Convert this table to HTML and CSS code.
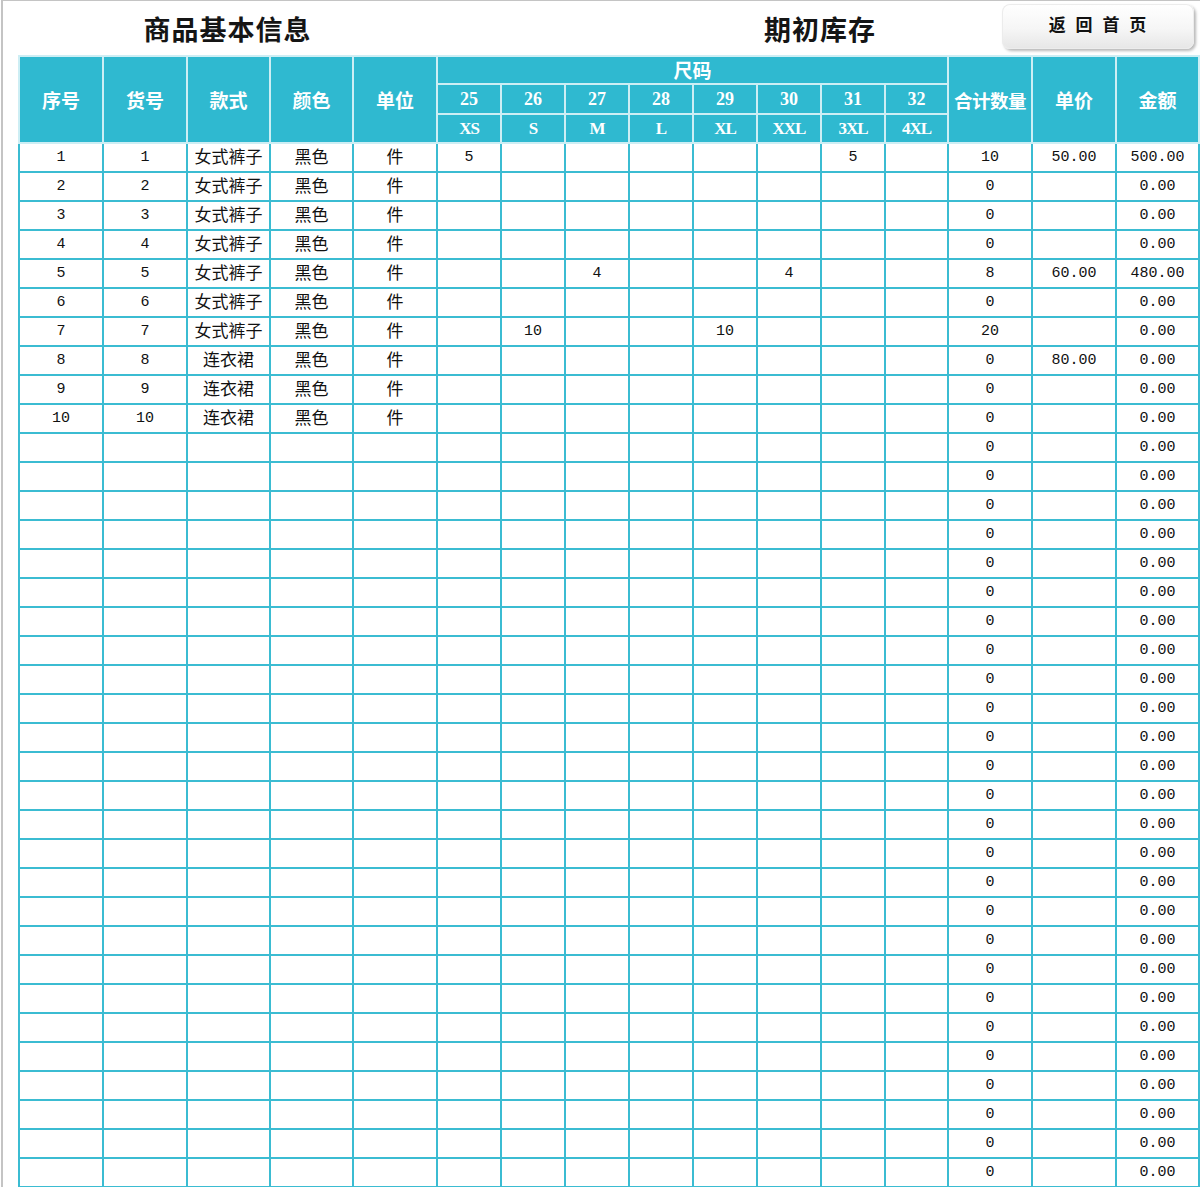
FILE: index.html
```html
<!DOCTYPE html>
<html lang="zh">
<head>
<meta charset="utf-8">
<title>期初库存</title>
<link rel="stylesheet" href="styles.css">
</head>
<body>
<div class="sheet">
  <div class="top">
    <div class="title t1">商品基本信息</div>
    <div class="title t2">期初库存</div>
    <div class="btn">返 回 首 页</div>
  </div>
  <table class="grid">
    <colgroup>
      <col class="w84"><col class="w84"><col class="w83"><col class="w83"><col class="w84">
      <col class="w64"><col class="w64"><col class="w64"><col class="w64"><col class="w64"><col class="w64"><col class="w64"><col class="w63">
      <col class="w84"><col class="w84"><col class="w83">
    </colgroup>
    <thead>
      <tr class="h1">
        <th rowspan="3">序号</th><th rowspan="3">货号</th><th rowspan="3">款式</th><th rowspan="3">颜色</th><th rowspan="3">单位</th>
        <th colspan="8">尺码</th>
        <th rowspan="3" class="tight">合计数量</th><th rowspan="3">单价</th><th rowspan="3">金额</th>
      </tr>
      <tr class="h2 num">
        <th>25</th><th>26</th><th>27</th><th>28</th><th>29</th><th>30</th><th>31</th><th>32</th>
      </tr>
      <tr class="h3 num">
        <th>XS</th><th>S</th><th>M</th><th>L</th><th>XL</th><th>XXL</th><th>3XL</th><th>4XL</th>
      </tr>
    </thead>
    <tbody>
      <tr><td>1</td><td>1</td><td class="cn">女式裤子</td><td class="cn">黑色</td><td class="cn">件</td><td>5</td><td></td><td></td><td></td><td></td><td></td><td>5</td><td></td><td>10</td><td>50.00</td><td>500.00</td></tr>
      <tr><td>2</td><td>2</td><td class="cn">女式裤子</td><td class="cn">黑色</td><td class="cn">件</td><td></td><td></td><td></td><td></td><td></td><td></td><td></td><td></td><td>0</td><td></td><td>0.00</td></tr>
      <tr><td>3</td><td>3</td><td class="cn">女式裤子</td><td class="cn">黑色</td><td class="cn">件</td><td></td><td></td><td></td><td></td><td></td><td></td><td></td><td></td><td>0</td><td></td><td>0.00</td></tr>
      <tr><td>4</td><td>4</td><td class="cn">女式裤子</td><td class="cn">黑色</td><td class="cn">件</td><td></td><td></td><td></td><td></td><td></td><td></td><td></td><td></td><td>0</td><td></td><td>0.00</td></tr>
      <tr><td>5</td><td>5</td><td class="cn">女式裤子</td><td class="cn">黑色</td><td class="cn">件</td><td></td><td></td><td>4</td><td></td><td></td><td>4</td><td></td><td></td><td>8</td><td>60.00</td><td>480.00</td></tr>
      <tr><td>6</td><td>6</td><td class="cn">女式裤子</td><td class="cn">黑色</td><td class="cn">件</td><td></td><td></td><td></td><td></td><td></td><td></td><td></td><td></td><td>0</td><td></td><td>0.00</td></tr>
      <tr><td>7</td><td>7</td><td class="cn">女式裤子</td><td class="cn">黑色</td><td class="cn">件</td><td></td><td>10</td><td></td><td></td><td>10</td><td></td><td></td><td></td><td>20</td><td></td><td>0.00</td></tr>
      <tr><td>8</td><td>8</td><td class="cn">连衣裙</td><td class="cn">黑色</td><td class="cn">件</td><td></td><td></td><td></td><td></td><td></td><td></td><td></td><td></td><td>0</td><td>80.00</td><td>0.00</td></tr>
      <tr><td>9</td><td>9</td><td class="cn">连衣裙</td><td class="cn">黑色</td><td class="cn">件</td><td></td><td></td><td></td><td></td><td></td><td></td><td></td><td></td><td>0</td><td></td><td>0.00</td></tr>
      <tr><td>10</td><td>10</td><td class="cn">连衣裙</td><td class="cn">黑色</td><td class="cn">件</td><td></td><td></td><td></td><td></td><td></td><td></td><td></td><td></td><td>0</td><td></td><td>0.00</td></tr>
      <tr><td></td><td></td><td></td><td></td><td></td><td></td><td></td><td></td><td></td><td></td><td></td><td></td><td></td><td>0</td><td></td><td>0.00</td></tr>
      <tr><td></td><td></td><td></td><td></td><td></td><td></td><td></td><td></td><td></td><td></td><td></td><td></td><td></td><td>0</td><td></td><td>0.00</td></tr>
      <tr><td></td><td></td><td></td><td></td><td></td><td></td><td></td><td></td><td></td><td></td><td></td><td></td><td></td><td>0</td><td></td><td>0.00</td></tr>
      <tr><td></td><td></td><td></td><td></td><td></td><td></td><td></td><td></td><td></td><td></td><td></td><td></td><td></td><td>0</td><td></td><td>0.00</td></tr>
      <tr><td></td><td></td><td></td><td></td><td></td><td></td><td></td><td></td><td></td><td></td><td></td><td></td><td></td><td>0</td><td></td><td>0.00</td></tr>
      <tr><td></td><td></td><td></td><td></td><td></td><td></td><td></td><td></td><td></td><td></td><td></td><td></td><td></td><td>0</td><td></td><td>0.00</td></tr>
      <tr><td></td><td></td><td></td><td></td><td></td><td></td><td></td><td></td><td></td><td></td><td></td><td></td><td></td><td>0</td><td></td><td>0.00</td></tr>
      <tr><td></td><td></td><td></td><td></td><td></td><td></td><td></td><td></td><td></td><td></td><td></td><td></td><td></td><td>0</td><td></td><td>0.00</td></tr>
      <tr><td></td><td></td><td></td><td></td><td></td><td></td><td></td><td></td><td></td><td></td><td></td><td></td><td></td><td>0</td><td></td><td>0.00</td></tr>
      <tr><td></td><td></td><td></td><td></td><td></td><td></td><td></td><td></td><td></td><td></td><td></td><td></td><td></td><td>0</td><td></td><td>0.00</td></tr>
      <tr><td></td><td></td><td></td><td></td><td></td><td></td><td></td><td></td><td></td><td></td><td></td><td></td><td></td><td>0</td><td></td><td>0.00</td></tr>
      <tr><td></td><td></td><td></td><td></td><td></td><td></td><td></td><td></td><td></td><td></td><td></td><td></td><td></td><td>0</td><td></td><td>0.00</td></tr>
      <tr><td></td><td></td><td></td><td></td><td></td><td></td><td></td><td></td><td></td><td></td><td></td><td></td><td></td><td>0</td><td></td><td>0.00</td></tr>
      <tr><td></td><td></td><td></td><td></td><td></td><td></td><td></td><td></td><td></td><td></td><td></td><td></td><td></td><td>0</td><td></td><td>0.00</td></tr>
      <tr><td></td><td></td><td></td><td></td><td></td><td></td><td></td><td></td><td></td><td></td><td></td><td></td><td></td><td>0</td><td></td><td>0.00</td></tr>
      <tr><td></td><td></td><td></td><td></td><td></td><td></td><td></td><td></td><td></td><td></td><td></td><td></td><td></td><td>0</td><td></td><td>0.00</td></tr>
      <tr><td></td><td></td><td></td><td></td><td></td><td></td><td></td><td></td><td></td><td></td><td></td><td></td><td></td><td>0</td><td></td><td>0.00</td></tr>
      <tr><td></td><td></td><td></td><td></td><td></td><td></td><td></td><td></td><td></td><td></td><td></td><td></td><td></td><td>0</td><td></td><td>0.00</td></tr>
      <tr><td></td><td></td><td></td><td></td><td></td><td></td><td></td><td></td><td></td><td></td><td></td><td></td><td></td><td>0</td><td></td><td>0.00</td></tr>
      <tr><td></td><td></td><td></td><td></td><td></td><td></td><td></td><td></td><td></td><td></td><td></td><td></td><td></td><td>0</td><td></td><td>0.00</td></tr>
      <tr><td></td><td></td><td></td><td></td><td></td><td></td><td></td><td></td><td></td><td></td><td></td><td></td><td></td><td>0</td><td></td><td>0.00</td></tr>
      <tr><td></td><td></td><td></td><td></td><td></td><td></td><td></td><td></td><td></td><td></td><td></td><td></td><td></td><td>0</td><td></td><td>0.00</td></tr>
      <tr><td></td><td></td><td></td><td></td><td></td><td></td><td></td><td></td><td></td><td></td><td></td><td></td><td></td><td>0</td><td></td><td>0.00</td></tr>
      <tr><td></td><td></td><td></td><td></td><td></td><td></td><td></td><td></td><td></td><td></td><td></td><td></td><td></td><td>0</td><td></td><td>0.00</td></tr>
      <tr><td></td><td></td><td></td><td></td><td></td><td></td><td></td><td></td><td></td><td></td><td></td><td></td><td></td><td>0</td><td></td><td>0.00</td></tr>
      <tr><td></td><td></td><td></td><td></td><td></td><td></td><td></td><td></td><td></td><td></td><td></td><td></td><td></td><td>0</td><td></td><td>0.00</td></tr>
    </tbody>
  </table>
</div>
</body>
</html>
```

FILE: styles.css
```css
* { box-sizing: border-box; }
html, body { margin: 0; padding: 0; background: #ffffff; }
body { width: 1200px; height: 1187px; overflow: hidden; }

.sheet {
  position: relative;
  margin-left: 1px;
  border-left: 2px solid #c4c4c4;
  border-top: 1px solid #c4c4c4;
  padding-left: 15px;
  height: 1187px;
}

.top {
  display: grid;
  grid-template-columns: 419px 762px;
  height: 54px;
  align-items: center;
}
.title {
  font-family: "Noto Sans CJK SC", sans-serif;
  font-weight: 700;
  font-size: 27px;
  color: #151515;
  text-align: center;
  letter-spacing: 1px;
}
.t2 { padding-left: 4px; }

.btn {
  position: absolute;
  left: 999px;
  top: 3px;
  width: 192px;
  height: 45px;
  border-radius: 8px;
  background: linear-gradient(#ffffff 0%, #f6f6f6 55%, #e6e6e6 100%);
  box-shadow: 2px 2px 3px rgba(0,0,0,0.28), inset 0 0 0 1px #ececec;
  font-family: "Noto Sans CJK SC", sans-serif;
  font-weight: 700;
  font-size: 17px;
  color: #111;
  display: flex;
  align-items: center;
  justify-content: center;
  letter-spacing: 1px;
  word-spacing: 4px;
  padding-bottom: 7px;
}

.grid {
  border-collapse: collapse;
  table-layout: fixed;
  width: 1181px;
}
.w84 { width: 84px; }
.w83 { width: 83px; }
.w64 { width: 64px; }
.w63 { width: 63px; }

.grid th {
  background: #2fb9d0;
  color: #ffffff;
  border: 2px solid #cdeef4;
  font-family: "Noto Sans CJK SC", sans-serif;
  font-weight: 700;
  font-size: 19px;
  padding: 0;
  text-align: center;
  vertical-align: middle;
  white-space: nowrap;
  overflow: hidden;
}
.grid th.tight { font-size: 18.5px; letter-spacing: -0.5px; }
.grid tr.h1 { height: 28px; }
.grid tr.h1 th { line-height: 26px; }
.grid tr.h2 { height: 30px; }
.grid tr.h3 { height: 29px; }
.grid tr.num th {
  font-family: "Liberation Serif", serif;
  font-size: 18px;
  font-weight: 700;
  line-height: 26px;
}
.grid tr.h3 th { font-size: 17px; letter-spacing: -1px; }

.grid td {
  height: 29px;
  border: 2px solid #3bbcd2;
  padding: 0;
  text-align: center;
  vertical-align: middle;
  font-family: "Liberation Mono", "Noto Sans CJK SC", monospace;
  font-size: 15px;
  color: #111;
  white-space: nowrap;
  overflow: hidden;
  line-height: 20px;
}
.grid td.cn {
  font-family: "Noto Sans CJK SC", sans-serif;
  font-size: 17px;
  color: #111;
  padding-bottom: 3px;
}
```
